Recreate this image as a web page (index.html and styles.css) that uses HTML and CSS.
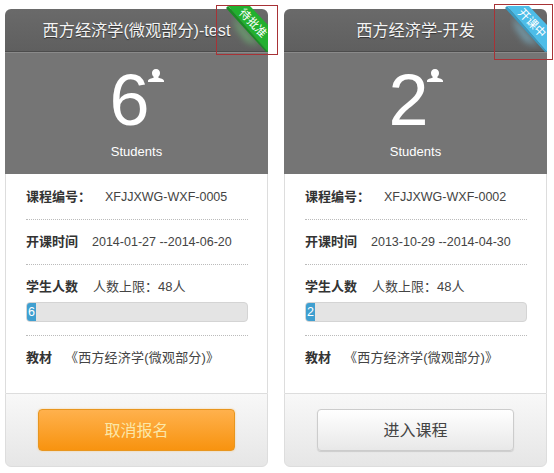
FILE: index.html
```html
<!DOCTYPE html>
<html lang="zh-CN">
<head>
  <meta charset="UTF-8" />
  <title>课程列表</title>
  <link rel="stylesheet" href="styles.css">
</head>

<body>
  <div class="course-list">

    <div class="course-card">
      <div class="card-title">西方经济学(微观部分)-test</div>
      <svg class="ribbon" viewBox="0 0 42 48" width="42" height="48">
        <defs>
          <filter id="glow"><feGaussianBlur stdDeviation="3" /></filter>
        </defs>
        <polygon points="8,10 34,40 20,36 10,22" fill="#6fc878" opacity="0.55" filter="url(#glow)" />
        <polygon points="2,0 24,0 42,19 42,46" fill="#22b02f" />
        <polygon points="2,0 42,46 40,46 0,2" fill="#1a8c25" />
      </svg>
      <span class="ribbon-text">待批准</span>
      <div class="mark-box"></div>
      <div class="card-stat">
        <div class="stat-num">6<svg class="user-icon" viewBox="0 0 16 13" width="16" height="13"><path d="M8 0c2.600 0 4 1.700 4 4 0 1.600-.7 3-1.600 3.700v1c1.800.6 5.600 1.200 5.600 3.300v1H0v-1c0-2.100 3.800-2.700 5.600-3.300v-1C4.700 7 4 5.600 4 4 4 1.700 5.400 0 8 0z" fill="#fff"/></svg></div>
        <div class="stat-label">Students</div>
      </div>
      <div class="card-body">
        <div class="info-row info-code"><b>课程编号：</b><span>XFJJXWG-WXF-0005</span></div>
        <div class="info-row info-date"><b>开课时间</b><span>2014-01-27 --2014-06-20</span></div>
        <div class="info-row info-limit"><b>学生人数</b><span class="text-cjk">人数上限：48人</span></div>
        <div class="progress"><div class="progress-bar">6</div></div>
        <div class="info-row info-book"><b>教材</b><span class="text-cjk">《西方经济学(微观部分)》</span></div>
      </div>
      <div class="card-foot">
        <a class="btn btn-orange">取消报名</a>
      </div>
    </div>

    <div class="course-card">
      <div class="card-title">西方经济学-开发</div>
      <svg class="ribbon" viewBox="0 0 42 48" width="42" height="48">
        <polygon points="8,10 34,40 20,36 10,22" fill="#7fc4de" opacity="0.55" filter="url(#glow)" />
        <polygon points="2,0 24,0 42,19 42,46" fill="#4dbde8" />
        <polygon points="2,0 42,46 40,46 0,2" fill="#3a9ac0" />
      </svg>
      <span class="ribbon-text">开课中</span>
      <div class="mark-box mark-box-2"></div>
      <div class="card-stat">
        <div class="stat-num">2<svg class="user-icon" viewBox="0 0 16 13" width="16" height="13"><path d="M8 0c2.600 0 4 1.700 4 4 0 1.600-.7 3-1.600 3.700v1c1.800.6 5.600 1.200 5.600 3.300v1H0v-1c0-2.100 3.800-2.700 5.600-3.300v-1C4.700 7 4 5.600 4 4 4 1.700 5.400 0 8 0z" fill="#fff"/></svg></div>
        <div class="stat-label">Students</div>
      </div>
      <div class="card-body">
        <div class="info-row info-code"><b>课程编号：</b><span>XFJJXWG-WXF-0002</span></div>
        <div class="info-row info-date"><b>开课时间</b><span>2013-10-29 --2014-04-30</span></div>
        <div class="info-row info-limit"><b>学生人数</b><span class="text-cjk">人数上限：48人</span></div>
        <div class="progress"><div class="progress-bar">2</div></div>
        <div class="info-row info-book"><b>教材</b><span class="text-cjk">《西方经济学(微观部分)》</span></div>
      </div>
      <div class="card-foot">
        <a class="btn btn-white">进入课程</a>
      </div>
    </div>

  </div>
</body>
</html>
```

FILE: styles.css
```css
* {
  margin: 0;
  padding: 0;
  box-sizing: border-box;
}

body {
  font-family: "Liberation Sans", "Noto Sans CJK SC", sans-serif;
  background: #fff;
  color: #444;
  font-size: 12px;
}

.course-list {
  display: flex;
  gap: 16px;
  padding: 9px 0 0 5px;
}

.course-card {
  position: relative;
  width: 263px;
  height: 458px;
  display: flex;
  flex-direction: column;
}

/* title bar */
.card-title {
  height: 43px;
  line-height: 42px;
  text-align: center;
  font-size: 16.2px;
  color: #f4f4f4;
  background: linear-gradient(#6a6a6a, #5f5f5f);
  border-radius: 6px 6px 0 0;
  border-bottom: 1px solid #4c4c4c;
  text-shadow: 0 1px 1px rgba(0, 0, 0, 0.5);
}

/* corner ribbon */
.ribbon {
  position: absolute;
  top: -3px;
  right: 0;
}

.ribbon-text {
  position: absolute;
  top: 8px;
  right: -5px;
  width: 40px;
  font-size: 11.5px;
  line-height: 12px;
  color: #fff;
  text-align: center;
  transform: rotate(46deg);
}

.mark-box {
  position: absolute;
  top: -4px;
  right: -10px;
  width: 62px;
  height: 50px;
  border: 1px solid #a83236;
}

.mark-box-2 {
  top: -5px;
  right: -6px;
  width: 59px;
  height: 56px;
}

/* student count */
.card-stat {
  height: 122px;
  background: #757575;
  border-top: 1px solid #8a8a8a;
  display: flex;
  flex-direction: column;
  align-items: center;
  color: #fff;
}

.stat-num {
  display: flex;
  align-items: flex-start;
  font-size: 72px;
  line-height: 72px;
  margin-top: 11px;
}

.user-icon {
  margin: 5px 0 0 -2px;
}

.stat-label {
  font-size: 13px;
  line-height: 16px;
  margin-top: 8px;
}

/* info rows */
.card-body {
  height: 219px;
  padding: 0 19px 0 20px;
  border: 1px solid #ddd;
  border-width: 0 1px;
  font-size: 12.5px;
  color: #444;
}

.info-row {
  display: flex;
  align-items: baseline;
  height: 45px;
  padding-top: 12px;
  line-height: 20px;
  border-bottom: 1px dotted #bbb;
}

.info-row b {
  font-size: 13px;
  color: #333;
  margin-right: 14px;
}

.text-cjk {
  font-size: 13px;
}

.info-code {
  height: 46px;
  padding-top: 13px;
}

.info-limit {
  height: 44px;
  border-bottom: none;
}

.info-limit b {
  margin-right: 15px;
}

.info-book {
  height: 46px;
  border-bottom: none;
  border-top: 1px dotted #bbb;
  margin-top: 13px;
}

.info-book b {
  margin-right: 13px;
}

.info-book .text-cjk {
  letter-spacing: 0.2px;
}

.progress {
  height: 20px;
  margin-top: -7px;
  background: #e4e4e4;
  border: 1px solid #d4d4d4;
  border-radius: 4px;
  overflow: hidden;
}

.progress-bar {
  width: 9px;
  height: 100%;
  background: #3f9fd0;
  color: #fff;
  line-height: 18px;
  padding-left: 1px;
}

/* footer button */
.card-foot {
  height: 74px;
  padding: 15px 32px;
  background: linear-gradient(#f8f8f8, #e6e6e6);
  border: 1px solid #ddd;
  border-radius: 0 0 6px 6px;
}

.btn {
  display: block;
  height: 42px;
  line-height: 41px;
  text-align: center;
  font-size: 16px;
  border-radius: 4px;
}

.btn-orange {
  color: #fbe7a8;
  background: linear-gradient(#ffb14d, #f8930f);
  border: 1px solid #e8961f;
  box-shadow: 0 0 2px #f5c98a;
}

.btn-white {
  color: #444;
  background: linear-gradient(#fff, #e8e8e8);
  border: 1px solid #ccc;
  box-shadow: 0 1px 1px #ccc;
}
```
